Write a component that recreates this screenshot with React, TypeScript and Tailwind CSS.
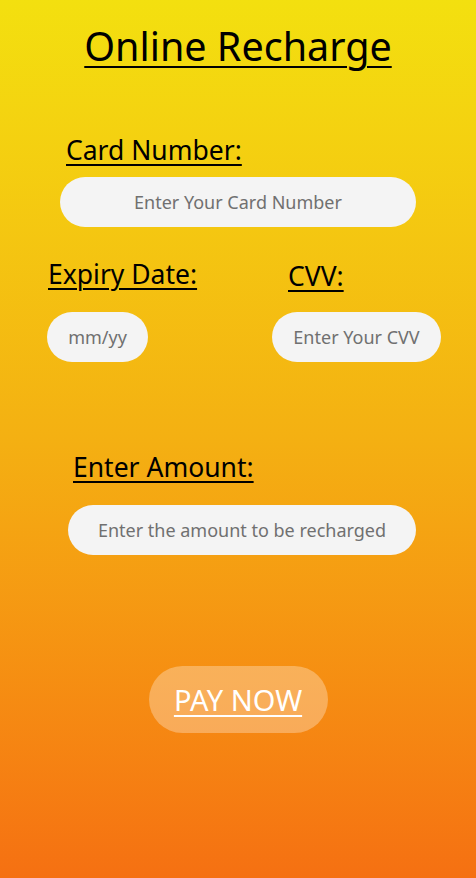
const font = { fontFamily: '"Noto Sans", "Noto Sans CJK KR", sans-serif' };

function Field({ placeholder, className }: { placeholder: string; className: string }) {
  return (
    <input
      placeholder={placeholder}
      className={`h-[50px] rounded-full bg-[#f4f4f4] text-center text-[18px] text-[#333] placeholder:text-[#707070] outline-none ${className}`}
    />
  );
}

function Label({ children, className }: { children: string; className: string }) {
  return (
    <label className={`block text-[26.5px] leading-none text-black underline decoration-[2px] underline-offset-[4px] ${className}`}>
      {children}
    </label>
  );
}

export default function App() {
  return (
    <div
      style={font}
      className="flex h-[878px] w-[476px] flex-col bg-gradient-to-b from-[#f3e00f] via-[#f4b012] to-[#f57012]"
    >
      <h1 className="mt-[27px] text-center text-[39.5px] leading-none text-black underline decoration-[2px] underline-offset-[5px]">
        Online Recharge
      </h1>

      <Label className="ml-[66px] mt-[70px]">Card Number:</Label>
      <Field placeholder="Enter Your Card Number" className="ml-[60px] mt-[14px] w-[356px]" />

      <div className="mt-[34px] flex">
        <div className="flex w-[225px] flex-col">
          <Label className="ml-[48px]">Expiry Date:</Label>
          <Field placeholder="mm/yy" className="ml-[47px] mt-[24px] w-[101px]" />
        </div>
        <div className="flex flex-col">
          <Label className="ml-[63px] mt-[2px]">CVV:</Label>
          <Field placeholder="Enter Your CVV" className="ml-[47px] mt-[22px] w-[169px]" />
        </div>
      </div>

      <Label className="ml-[73px] mt-[92px]">Enter Amount:</Label>
      <Field placeholder="Enter the amount to be recharged" className="ml-[68px] mt-[25px] w-[348px]" />

      <button className="mx-auto mt-[111px] h-[67px] w-[179px] rounded-full bg-white/30 text-[29px] text-white underline decoration-[2px] underline-offset-[4px]">
        PAY NOW
      </button>
    </div>
  );
}
